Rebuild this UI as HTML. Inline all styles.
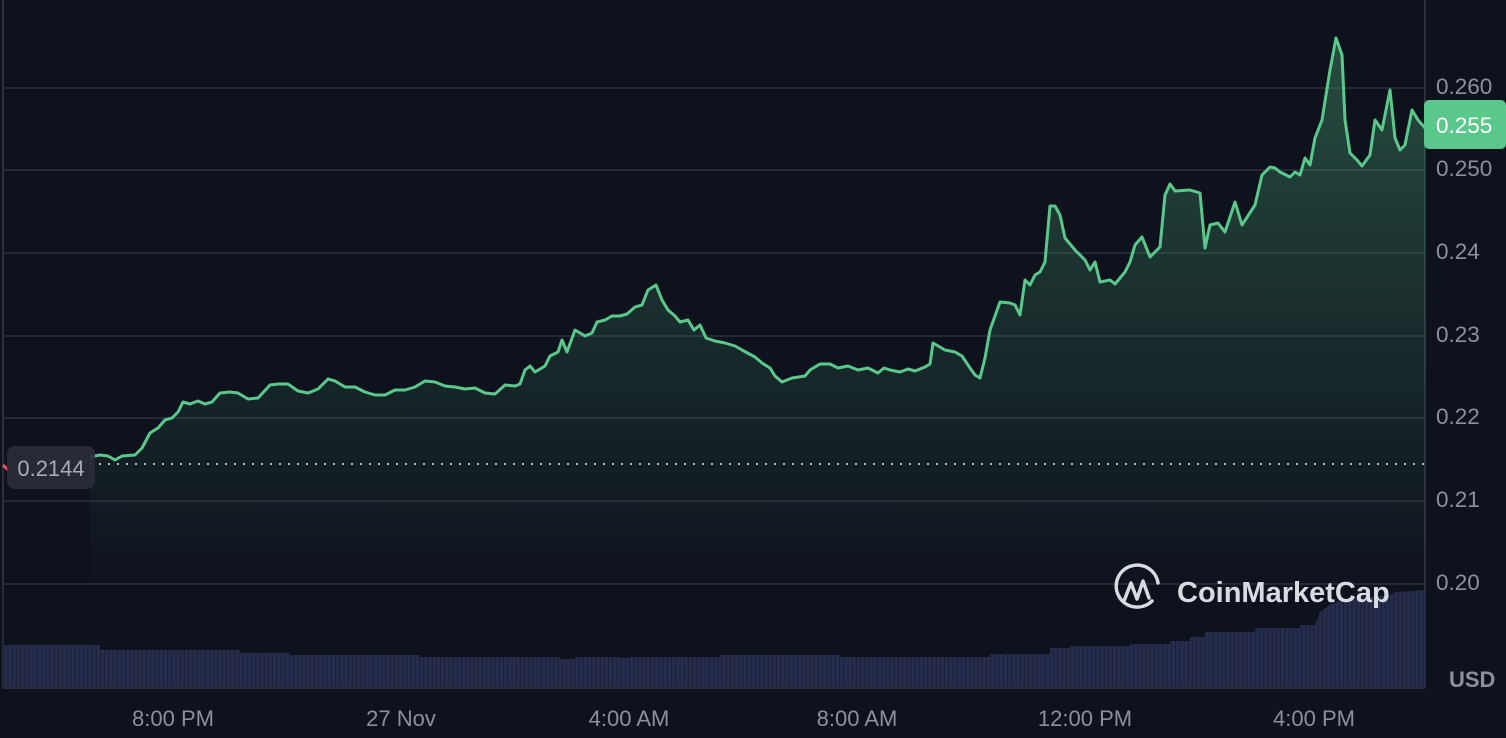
<!DOCTYPE html>
<html><head><meta charset="utf-8"><style>
html,body{margin:0;padding:0;background:#0e121d;width:1506px;height:738px;overflow:hidden;font-family:"Liberation Sans",sans-serif}
</style></head><body>
<svg width="1506" height="738" viewBox="0 0 1506 738" xmlns="http://www.w3.org/2000/svg">
<defs>
<linearGradient id="g" gradientUnits="userSpaceOnUse" x1="0" y1="40" x2="0" y2="687">
<stop offset="0" stop-color="#5ac88a" stop-opacity="0.32"/>
<stop offset="0.5" stop-color="#5ac88a" stop-opacity="0.12"/>
<stop offset="0.85" stop-color="#5ac88a" stop-opacity="0"/>
</linearGradient>
<pattern id="vb" width="4.2" height="10" patternUnits="userSpaceOnUse"><rect x="3.4" width="0.8" height="10" fill="#0e121d" opacity="0.6"/></pattern>
</defs>
<rect width="1506" height="738" fill="#0e121d"/>
<g stroke="#2b2f3a" stroke-width="1.5">
<line x1="3" y1="88" x2="1425" y2="88"/><line x1="3" y1="170" x2="1425" y2="170"/>
<line x1="3" y1="253" x2="1425" y2="253"/><line x1="3" y1="336" x2="1425" y2="336"/>
<line x1="3" y1="418" x2="1425" y2="418"/><line x1="3" y1="501" x2="1425" y2="501"/>
<line x1="3" y1="584" x2="1425" y2="584"/>
</g>
<line x1="1425" y1="0" x2="1425" y2="688" stroke="#2b2f3a" stroke-width="2"/>
<line x1="3" y1="0" x2="3" y2="688" stroke="#2b2f3a" stroke-width="2"/>
<line x1="3" y1="688" x2="1425" y2="688" stroke="#2b2f3a" stroke-width="2"/>
<polygon fill="url(#g)" points="90,457 100,455 108,456 115,460 122,456 135,455 142,448 150,433 158,428 165,420 172,418 178,412 183,402 190,404 198,401 205,404 212,402 220,393 230,392 238,393 248,399 258,398 270,385 278,384 288,384 298,391 308,393 318,389 328,379 335,381 345,387 355,387 365,392 375,395 385,395 395,390 405,390 415,387 425,381 435,382 445,386 455,387 465,389 475,388 485,393 495,394 505,385 515,386 520,384 525,370 530,366 535,372 545,366 550,356 558,352 562,340 567,352 575,330 585,336 592,333 597,322 605,320 612,316 620,316 627,314 635,307 642,305 648,290 656,285 662,300 668,310 675,316 680,322 688,320 694,330 700,325 706,338 715,341 725,343 735,346 742,350 755,357 762,363 770,368 775,376 782,382 792,378 805,376 810,370 820,364 830,364 838,368 848,366 858,370 868,368 878,373 884,368 890,370 900,372 908,369 915,371 925,367 930,364 933,343 945,350 955,352 962,356 970,368 975,375 980,378 985,358 990,330 1000,302 1010,303 1015,305 1020,315 1025,280 1030,285 1035,275 1040,272 1045,262 1050,206 1055,206 1060,215 1065,238 1075,250 1085,260 1090,270 1095,262 1100,282 1110,280 1115,284 1125,272 1130,262 1135,245 1142,237 1150,257 1160,247 1165,195 1170,184 1175,191 1190,190 1200,193 1205,248 1210,225 1218,223 1225,232 1235,202 1242,225 1255,205 1262,175 1270,167 1275,168 1280,172 1290,177 1295,172 1300,175 1305,158 1310,165 1315,138 1322,120 1330,70 1336,38 1342,55 1345,120 1350,153 1357,160 1362,166 1370,155 1375,120 1382,130 1390,90 1395,138 1400,150 1405,145 1412,110 1418,120 1425,128 1425,687 90,687"/>
<polygon fill="#262d4c" points="3,687 3,645 100,645 100,650 240,650 240,653 290,653 290,655 420,655 420,657 560,657 560,659 575,659 575,657 620,657 620,658 630,658 630,657 720,657 720,655 840,655 840,657 990,657 990,654 1050,654 1050,648 1070,648 1070,646 1130,646 1130,644 1170,644 1170,641 1190,641 1190,637 1205,637 1205,632 1255,632 1255,628 1300,628 1300,625 1315,625 1320,612 1330,605 1340,600 1390,595 1395,592 1425,590 1425,687"/>
<rect x="3" y="585" width="1422" height="102" fill="url(#vb)"/>
<polyline fill="none" stroke="#e0565b" stroke-width="3" points="3,465 8,470"/>
<line x1="90" y1="464" x2="1425" y2="464" stroke="#b5b9c4" stroke-width="2" stroke-dasharray="2 7"/>
<polyline fill="none" stroke="#5ac88a" stroke-width="3" stroke-linejoin="round" points="90,457 100,455 108,456 115,460 122,456 135,455 142,448 150,433 158,428 165,420 172,418 178,412 183,402 190,404 198,401 205,404 212,402 220,393 230,392 238,393 248,399 258,398 270,385 278,384 288,384 298,391 308,393 318,389 328,379 335,381 345,387 355,387 365,392 375,395 385,395 395,390 405,390 415,387 425,381 435,382 445,386 455,387 465,389 475,388 485,393 495,394 505,385 515,386 520,384 525,370 530,366 535,372 545,366 550,356 558,352 562,340 567,352 575,330 585,336 592,333 597,322 605,320 612,316 620,316 627,314 635,307 642,305 648,290 656,285 662,300 668,310 675,316 680,322 688,320 694,330 700,325 706,338 715,341 725,343 735,346 742,350 755,357 762,363 770,368 775,376 782,382 792,378 805,376 810,370 820,364 830,364 838,368 848,366 858,370 868,368 878,373 884,368 890,370 900,372 908,369 915,371 925,367 930,364 933,343 945,350 955,352 962,356 970,368 975,375 980,378 985,358 990,330 1000,302 1010,303 1015,305 1020,315 1025,280 1030,285 1035,275 1040,272 1045,262 1050,206 1055,206 1060,215 1065,238 1075,250 1085,260 1090,270 1095,262 1100,282 1110,280 1115,284 1125,272 1130,262 1135,245 1142,237 1150,257 1160,247 1165,195 1170,184 1175,191 1190,190 1200,193 1205,248 1210,225 1218,223 1225,232 1235,202 1242,225 1255,205 1262,175 1270,167 1275,168 1280,172 1290,177 1295,172 1300,175 1305,158 1310,165 1315,138 1322,120 1330,70 1336,38 1342,55 1345,120 1350,153 1357,160 1362,166 1370,155 1375,120 1382,130 1390,90 1395,138 1400,150 1405,145 1412,110 1418,120 1425,128"/>
<rect x="7" y="446" width="88" height="43" rx="8" fill="#2a2e38" opacity="0.9"/>
<text x="51" y="476" font-size="22" fill="#a7abb5" text-anchor="middle">0.2144</text>
<g font-size="22.5" fill="#8c909c">
<text x="1436" y="94">0.260</text><text x="1436" y="176">0.250</text>
<text x="1436" y="259">0.24</text><text x="1436" y="342">0.23</text>
<text x="1436" y="424">0.22</text><text x="1436" y="507">0.21</text>
<text x="1436" y="590">0.20</text>
</g>
<rect x="1424" y="100" width="82" height="49" rx="5" fill="#5ac88a"/>
<text x="1436" y="133" font-size="22.5" fill="#ffffff">0.255</text>
<text x="1449" y="687" font-size="22" font-weight="bold" fill="#8c909c">USD</text>
<g font-size="22" fill="#8c909c" text-anchor="middle">
<text x="173" y="726">8:00 PM</text><text x="401" y="726">27 Nov</text>
<text x="629" y="726">4:00 AM</text><text x="857" y="726">8:00 AM</text>
<text x="1085" y="726">12:00 PM</text><text x="1314" y="726">4:00 PM</text>
</g>
<g fill="none" stroke="#d8dbe2" stroke-width="3.5" stroke-linecap="round" stroke-linejoin="round">
<path d="M1152,601 A21,21 0 1 1 1158,583"/>
<path d="M1124,601 L1131,583 L1137,599 L1143,581 L1149,598"/>
</g>
<text x="1177" y="602" font-size="29" font-weight="bold" fill="#d8dbe2">CoinMarketCap</text>
</svg>
</body></html>
